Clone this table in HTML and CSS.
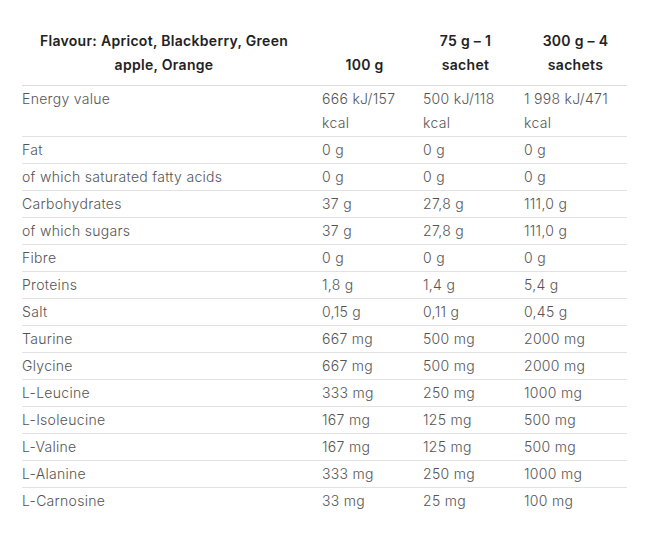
FILE: index.html
```html
<!DOCTYPE html>
<html lang="en">
<head>
<meta charset="utf-8">
<title>Nutrition facts</title>
<link rel="stylesheet" href="styles.css">
</head>
<body>
<div class="wrap">
  <table class="nutri">
    <colgroup>
      <col class="c-label">
      <col class="c-val">
      <col class="c-val">
      <col class="c-last">
    </colgroup>
    <thead>
      <tr>
        <th>Flavour: Apricot, Blackberry, Green apple, Orange</th>
        <th>100 g</th>
        <th>75 g – 1 sachet</th>
        <th>300 g – 4 sachets</th>
      </tr>
    </thead>
    <tbody>
      <tr><td>Energy value</td><td>666 kJ/157 kcal</td><td>500 kJ/118 kcal</td><td>1 998 kJ/471 kcal</td></tr>
      <tr><td>Fat</td><td>0 g</td><td>0 g</td><td>0 g</td></tr>
      <tr><td>of which saturated fatty acids</td><td>0 g</td><td>0 g</td><td>0 g</td></tr>
      <tr><td>Carbohydrates</td><td>37 g</td><td>27,8 g</td><td>111,0 g</td></tr>
      <tr><td>of which sugars</td><td>37 g</td><td>27,8 g</td><td>111,0 g</td></tr>
      <tr><td>Fibre</td><td>0 g</td><td>0 g</td><td>0 g</td></tr>
      <tr><td>Proteins</td><td>1,8 g</td><td>1,4 g</td><td>5,4 g</td></tr>
      <tr><td>Salt</td><td>0,15 g</td><td>0,11 g</td><td>0,45 g</td></tr>
      <tr><td>Taurine</td><td>667 mg</td><td>500 mg</td><td>2000 mg</td></tr>
      <tr><td>Glycine</td><td>667 mg</td><td>500 mg</td><td>2000 mg</td></tr>
      <tr><td>L-Leucine</td><td>333 mg</td><td>250 mg</td><td>1000 mg</td></tr>
      <tr><td>L-Isoleucine</td><td>167 mg</td><td>125 mg</td><td>500 mg</td></tr>
      <tr><td>L-Valine</td><td>167 mg</td><td>125 mg</td><td>500 mg</td></tr>
      <tr><td>L-Alanine</td><td>333 mg</td><td>250 mg</td><td>1000 mg</td></tr>
      <tr><td>L-Carnosine</td><td>33 mg</td><td>25 mg</td><td>100 mg</td></tr>
    </tbody>
  </table>
</div>
</body>
</html>
```

FILE: styles.css
```css
html, body {
  margin: 0;
  padding: 0;
  background: #ffffff;
}

.wrap {
  padding: 29px 26px 0 22px;
  font-family: "Inter", "Open Sans", "DejaVu Sans", sans-serif;
  font-size: 14px;
  letter-spacing: 0.3px;
  line-height: 24px;
}

.nutri {
  width: 605px;
  border-collapse: collapse;
  table-layout: fixed;
}

.c-label { width: 300px; }
.c-val { width: 101px; }
.c-last { width: 103px; }

.nutri th {
  font-weight: 600;
  color: #222222;
  text-align: center;
  vertical-align: bottom;
  padding: 0 16px 8px 0;
  border-bottom: 1px solid #dcdcdc;
}

.nutri th:last-child,
.nutri td:last-child {
  padding-right: 0;
}

.nutri td {
  font-weight: 300;
  color: #555555;
  text-align: left;
  vertical-align: top;
  padding: 1px 16px 1px 0;
  border-bottom: 1px solid #e2e2e2;
}

.nutri tbody tr:last-child td {
  border-bottom: none;
}
```
